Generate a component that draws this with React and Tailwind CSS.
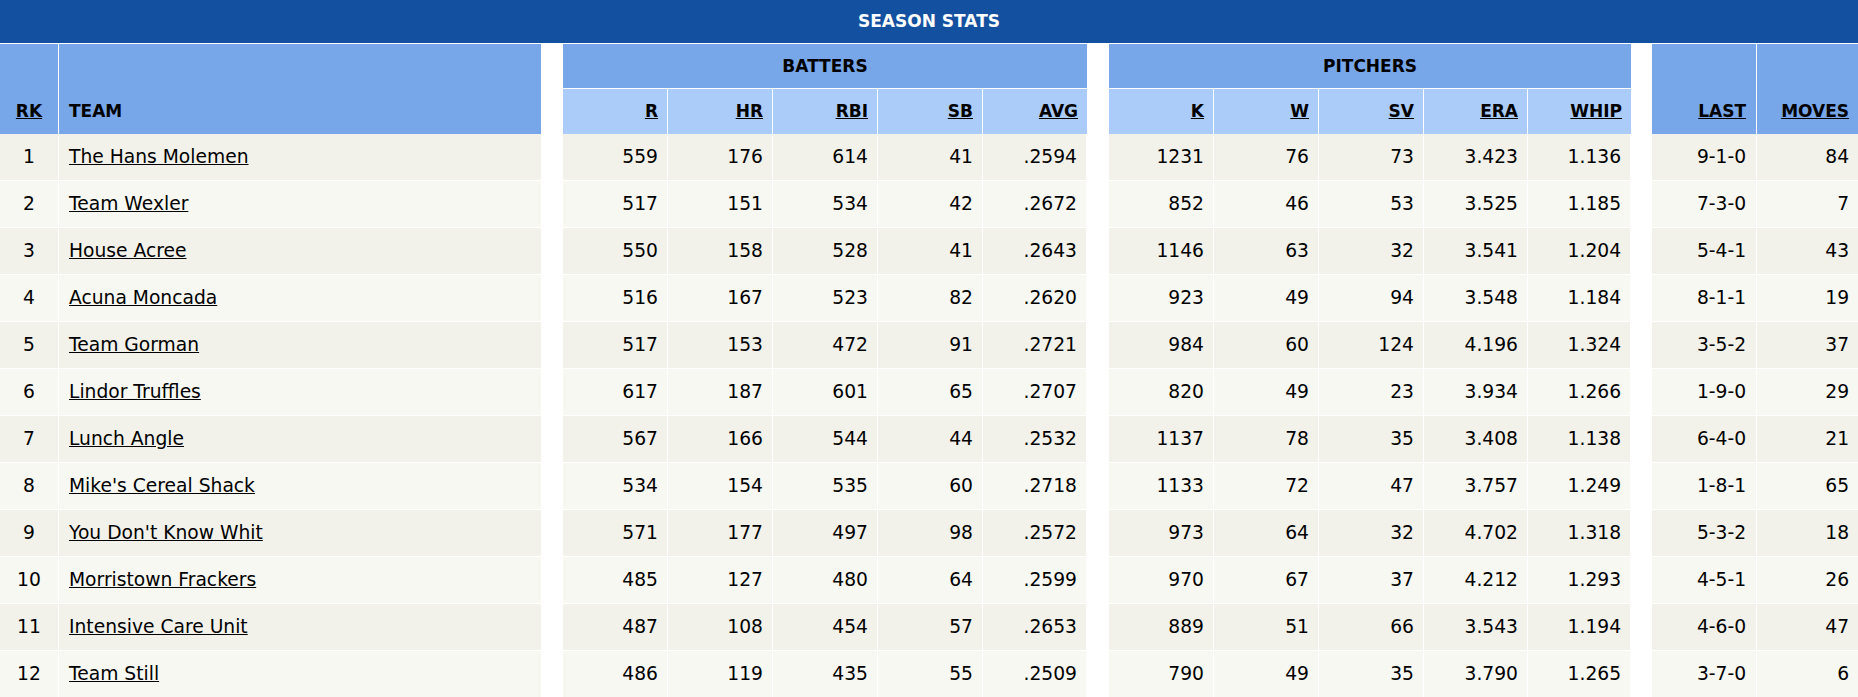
import React from "react";

const teams = [
  [1, "The Hans Molemen", 559, 176, 614, 41, ".2594", 1231, 76, 73, "3.423", "1.136", "9-1-0", 84],
  [2, "Team Wexler", 517, 151, 534, 42, ".2672", 852, 46, 53, "3.525", "1.185", "7-3-0", 7],
  [3, "House Acree", 550, 158, 528, 41, ".2643", 1146, 63, 32, "3.541", "1.204", "5-4-1", 43],
  [4, "Acuna Moncada", 516, 167, 523, 82, ".2620", 923, 49, 94, "3.548", "1.184", "8-1-1", 19],
  [5, "Team Gorman", 517, 153, 472, 91, ".2721", 984, 60, 124, "4.196", "1.324", "3-5-2", 37],
  [6, "Lindor Truffles", 617, 187, 601, 65, ".2707", 820, 49, 23, "3.934", "1.266", "1-9-0", 29],
  [7, "Lunch Angle", 567, 166, 544, 44, ".2532", 1137, 78, 35, "3.408", "1.138", "6-4-0", 21],
  [8, "Mike's Cereal Shack", 534, 154, 535, 60, ".2718", 1133, 72, 47, "3.757", "1.249", "1-8-1", 65],
  [9, "You Don't Know Whit", 571, 177, 497, 98, ".2572", 973, 64, 32, "4.702", "1.318", "5-3-2", 18],
  [10, "Morristown Frackers", 485, 127, 480, 64, ".2599", 970, 67, 37, "4.212", "1.293", "4-5-1", 26],
  [11, "Intensive Care Unit", 487, 108, 454, 57, ".2653", 889, 51, 66, "3.543", "1.194", "4-6-0", 47],
  [12, "Team Still", 486, 119, 435, 55, ".2509", 790, 49, 35, "3.790", "1.265", "3-7-0", 6],
];

const batters = ["R", "HR", "RBI", "SB", "AVG"];
const pitchers = ["K", "W", "SV", "ERA", "WHIP"];

const sub = "bg-[#abcbf8] border-r border-white text-right align-bottom pb-[10px] pr-[9px] font-bold";
const subLast = "bg-[#abcbf8] text-right align-bottom pb-[10px] pr-[9px] font-bold";
const num = "border-r border-b border-white text-right align-middle pr-[9px]";

export default function App() {
  return (
    <div className="w-[1858px] h-[697px] overflow-hidden bg-white text-black font-['DejaVu_Sans',Verdana,sans-serif]">
      <div className="h-[44px] bg-[#1450a0] border-b border-white flex items-center justify-center text-white font-bold text-[17px]">
        SEASON STATS
      </div>
      <table className="table-fixed border-separate border-spacing-0 w-[1858px]">
        <colgroup>
          <col className="w-[59px]" />
          <col className="w-[482px]" />
          <col className="w-[22px]" />
          <col className="w-[105px]" />
          <col className="w-[105px]" />
          <col className="w-[105px]" />
          <col className="w-[105px]" />
          <col className="w-[104px]" />
          <col className="w-[22px]" />
          <col className="w-[105px]" />
          <col className="w-[105px]" />
          <col className="w-[105px]" />
          <col className="w-[104px]" />
          <col className="w-[103px]" />
          <col className="w-[21px]" />
          <col className="w-[105px]" />
          <col className="w-[101px]" />
        </colgroup>
        <thead className="text-[17px]">
          <tr className="h-[45px]">
            <th rowSpan={2} className="bg-[#77a7e9] border-r border-white text-center align-bottom pb-[10px] font-bold">
              <a href="#" className="underline">RK</a>
            </th>
            <th rowSpan={2} className="bg-[#77a7e9] text-left align-bottom pb-[10px] pl-[10px] font-bold">
              TEAM
            </th>
            <th rowSpan={2} className="bg-white" />
            <th colSpan={5} className="bg-[#77a7e9] border-b border-white text-center align-middle pt-[2px] font-bold">
              BATTERS
            </th>
            <th rowSpan={2} className="bg-white" />
            <th colSpan={5} className="bg-[#77a7e9] border-b border-white text-center align-middle pt-[2px] font-bold">
              PITCHERS
            </th>
            <th rowSpan={2} className="bg-white" />
            <th rowSpan={2} className="bg-[#77a7e9] border-r border-white text-right align-bottom pb-[10px] pr-[10px] font-bold">
              <a href="#" className="underline">LAST</a>
            </th>
            <th rowSpan={2} className="bg-[#77a7e9] text-right align-bottom pb-[10px] pr-[9px] font-bold">
              <a href="#" className="underline">MOVES</a>
            </th>
          </tr>
          <tr className="h-[45px]">
            {batters.map((h, i) => (
              <th key={h} className={i === 4 ? subLast : sub}>
                <a href="#" className="underline">{h}</a>
              </th>
            ))}
            {pitchers.map((h, i) => (
              <th key={h} className={i === 4 ? subLast : sub}>
                <a href="#" className="underline">{h}</a>
              </th>
            ))}
          </tr>
        </thead>
        <tbody className="text-[18.7px]">
          {teams.map((t, r) => {
            const bg = r % 2 === 0 ? "bg-[#f2f2ea]" : "bg-[#f7f8f2]";
            const [rk, name, ...stats] = t;
            return (
              <tr key={rk} className={`h-[47px] ${bg}`}>
                <td className="border-r border-b border-white text-center align-middle">{rk}</td>
                <td className="border-b border-white align-middle pl-[10px]">
                  <a href="#" className="underline">{name}</a>
                </td>
                <td className="bg-white" />
                {stats.slice(0, 5).map((v, i) => (
                  <td key={i} className={num}>{v}</td>
                ))}
                <td className="bg-white" />
                {stats.slice(5, 10).map((v, i) => (
                  <td key={i} className={num}>{v}</td>
                ))}
                <td className="bg-white" />
                <td className={`${num} pr-[10px]`}>{stats[10]}</td>
                <td className="border-b border-white text-right align-middle pr-[9px]">{stats[11]}</td>
              </tr>
            );
          })}
        </tbody>
      </table>
    </div>
  );
}
